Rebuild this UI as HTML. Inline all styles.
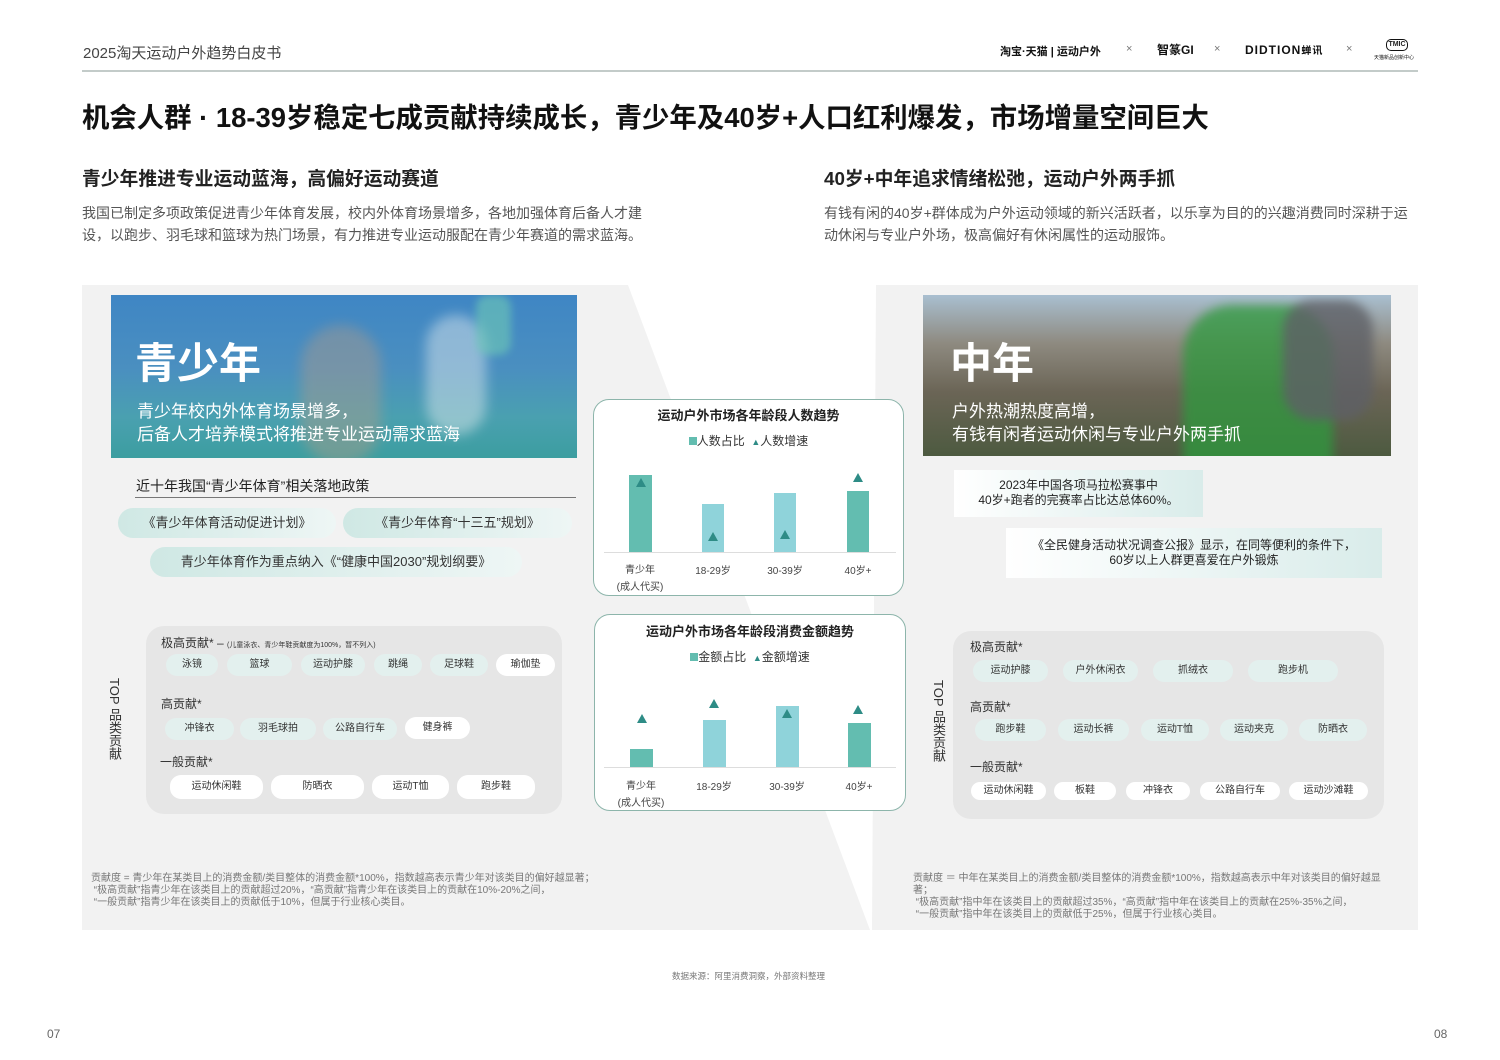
<!DOCTYPE html>
<html><head><meta charset="utf-8"><style>
*{margin:0;padding:0;box-sizing:border-box}
body{width:1500px;height:1060px;background:#fff;position:relative;overflow:hidden;font-family:"Liberation Sans","Noto Sans CJK SC",sans-serif;color:#222}
.a{position:absolute;white-space:nowrap}
.chip{position:absolute;height:22px;border-radius:11px;font-size:10px;line-height:22px;text-align:center;color:#333}
.m{background:#e3f0ee}.w{background:#fff}
.bar{position:absolute}
.tri{position:absolute;width:0;height:0;border-left:5px solid transparent;border-right:5px solid transparent;border-bottom:9px solid #2e8c86}
.lab{position:absolute;font-size:10px;color:#444;text-align:center;width:60px}
</style></head><body>
<div class="a" style="left:83px;top:42px;font-size:15px;color:#444">2025淘天运动户外趋势白皮书</div>
<div class="a" style="left:1000px;top:43px;font-size:11px;font-weight:bold;color:#111">淘宝·天猫 | 运动户外</div>
<div class="a" style="left:1126px;top:43px;font-size:11px;color:#777">×</div>
<div class="a" style="left:1157px;top:41px;font-size:12px;font-weight:bold;color:#111">智篆GI</div>
<div class="a" style="left:1214px;top:43px;font-size:11px;color:#777">×</div>
<div class="a" style="left:1245px;top:42px;font-size:12px;font-weight:bold;color:#111;letter-spacing:1px">DIDTION<span style="font-size:10px">蝉讯</span></div>
<div class="a" style="left:1346px;top:43px;font-size:11px;color:#777">×</div>
<div class="a" style="left:1386px;top:39px;width:22px;height:12px;border:1.5px solid #111;border-radius:5px;font-size:7px;font-weight:bold;line-height:9px;text-align:center">TMIC</div>
<div class="a" style="left:1374px;top:54px;font-size:5px;color:#111">天猫新品创新中心</div>
<div class="a" style="left:82px;top:70px;width:1336px;height:2px;background:#c3cbc9"></div>
<div class="a" style="left:82px;top:95px;font-size:27.4px;font-weight:bold;color:#111">机会人群 · 18-39岁稳定七成贡献持续成长，青少年及40岁+人口红利爆发，市场增量空间巨大</div>
<div class="a" style="left:82px;top:164px;font-size:18.8px;font-weight:bold;color:#222">青少年推进专业运动蓝海，高偏好运动赛道</div>
<div class="a" style="left:82px;top:202px;font-size:14px;color:#555;line-height:22px">我国已制定多项政策促进青少年体育发展，校内外体育场景增多，各地加强体育后备人才建<br>设，以跑步、羽毛球和篮球为热门场景，有力推进专业运动服配在青少年赛道的需求蓝海。</div>
<div class="a" style="left:824px;top:164px;font-size:18.8px;font-weight:bold;color:#222">40岁+中年追求情绪松弛，运动户外两手抓</div>
<div class="a" style="left:824px;top:202px;font-size:14px;color:#555;line-height:22px">有钱有闲的40岁+群体成为户外运动领域的新兴活跃者，以乐享为目的的兴趣消费同时深耕于运<br>动休闲与专业户外场，极高偏好有休闲属性的运动服饰。</div>

<svg class="a" style="left:0;top:0" width="1500" height="1060">
<polygon points="82,285 628,285 870,930 82,930" fill="#f2f2f2"/>
<polygon points="876,285 1418,285 1418,930 872,930" fill="#f2f2f2"/>
</svg>

<!-- left photo -->
<div class="a" style="left:111px;top:295px;width:466px;height:163px;background:linear-gradient(180deg,#3f86c4 0%,#4a8fc0 45%,#4aa0b0 75%,#3c9ea0 100%);overflow:hidden">
<div style="position:absolute;left:190px;top:30px;width:80px;height:140px;background:#b89c85;border-radius:40px;opacity:.4;filter:blur(6px)"></div>
<div style="position:absolute;left:315px;top:20px;width:60px;height:120px;background:#e8eef0;border-radius:30px;opacity:.45;filter:blur(6px)"></div>
<div style="position:absolute;left:365px;top:0;width:35px;height:60px;background:#6fcab6;border-radius:12px;opacity:.6;filter:blur(4px)"></div>
</div>
<div class="a" style="left:135px;top:330px;font-size:42px;font-weight:bold;color:#fff">青少年</div>
<div class="a" style="left:137px;top:400px;font-size:17px;color:#fff;line-height:23px">青少年校内外体育场景增多，<br>后备人才培养模式将推进专业运动需求蓝海</div>
<div class="a" style="left:136px;top:476px;font-size:14px;color:#222">近十年我国“青少年体育”相关落地政策</div>
<div class="a" style="left:135px;top:497px;width:441px;height:1px;background:#777"></div>
<div class="chip" style="left:118px;top:508px;width:218px;height:30px;border-radius:15px;line-height:30px;font-size:13px;background:linear-gradient(90deg,#cfe8e4,#eef6f5)">《青少年体育活动促进计划》</div>
<div class="chip" style="left:343px;top:508px;width:229px;height:30px;border-radius:15px;line-height:30px;font-size:13px;background:linear-gradient(90deg,#cfe8e4,#eef6f5)">《青少年体育“十三五”规划》</div>
<div class="chip" style="left:150px;top:547px;width:372px;height:30px;border-radius:15px;line-height:30px;font-size:13px;background:linear-gradient(90deg,#cfe8e4,#eef6f5)">青少年体育作为重点纳入《“健康中国2030”规划纲要》</div>

<div class="a" style="left:146px;top:626px;width:416px;height:188px;background:#e6e6e6;border-radius:18px"></div>
<div class="a" style="left:105px;top:678px;font-size:13px;writing-mode:vertical-rl;color:#333">TOP 品类贡献</div>
<div class="a" style="left:161px;top:634px;font-size:12px;color:#333">极高贡献* – <span style="font-size:7px">(儿童泳衣、青少年鞋贡献度为100%，暂不列入)</span></div>
<div class="chip m" style="left:166px;top:654px;width:52px">泳镜</div>
<div class="chip m" style="left:227px;top:654px;width:65px">篮球</div>
<div class="chip m" style="left:301px;top:654px;width:64px">运动护膝</div>
<div class="chip m" style="left:374px;top:654px;width:48px">跳绳</div>
<div class="chip m" style="left:430px;top:654px;width:58px">足球鞋</div>
<div class="chip w" style="left:496px;top:654px;width:59px">瑜伽垫</div>
<div class="a" style="left:161px;top:695px;font-size:12px;color:#333">高贡献*</div>
<div class="chip m" style="left:165px;top:718px;width:69px">冲锋衣</div>
<div class="chip m" style="left:240px;top:718px;width:76px">羽毛球拍</div>
<div class="chip m" style="left:323px;top:718px;width:74px">公路自行车</div>
<div class="chip w" style="left:405px;top:717px;width:65px">健身裤</div>
<div class="a" style="left:160px;top:753px;font-size:12px;color:#333">一般贡献*</div>
<div class="chip w" style="left:170px;top:775px;width:93px;height:24px;line-height:24px">运动休闲鞋</div>
<div class="chip w" style="left:271px;top:775px;width:93px;height:24px;line-height:24px">防晒衣</div>
<div class="chip w" style="left:372px;top:775px;width:77px;height:24px;line-height:24px">运动T恤</div>
<div class="chip w" style="left:457px;top:775px;width:78px;height:24px;line-height:24px">跑步鞋</div>
<div class="a" style="left:91px;top:873px;font-size:10px;color:#777;line-height:12px">贡献度 = 青少年在某类目上的消费金额/类目整体的消费金额*100%，指数越高表示青少年对该类目的偏好越显著；<br>&nbsp;“极高贡献”指青少年在该类目上的贡献超过20%，“高贡献”指青少年在该类目上的贡献在10%-20%之间，<br>&nbsp;“一般贡献”指青少年在该类目上的贡献低于10%，但属于行业核心类目。</div>

<!-- charts -->
<div class="a" style="left:593px;top:399px;width:311px;height:197px;background:#fff;border:1.5px solid #8db5ab;border-radius:16px"></div>
<div class="a" style="left:593px;top:405px;width:311px;text-align:center;font-size:13px;font-weight:bold;color:#222">运动户外市场各年龄段人数趋势</div>
<div class="a" style="left:593px;top:432px;width:311px;text-align:center;font-size:12px;color:#333"><span style="display:inline-block;width:8px;height:8px;background:#63bdb0"></span>人数占比 &nbsp;<span style="color:#2e8c86;font-size:9px">▲</span>人数增速</div>
<div class="a" style="left:604px;top:552px;width:292px;height:1px;background:#ddd"></div>
<div class="bar" style="left:629px;top:475px;width:23px;height:77px;background:#63bdb0"></div>
<div class="bar" style="left:702px;top:504px;width:22px;height:48px;background:#8fd3da"></div>
<div class="bar" style="left:774px;top:493px;width:22px;height:59px;background:#8fd3da"></div>
<div class="bar" style="left:847px;top:491px;width:22px;height:61px;background:#63bdb0"></div>
<div class="tri" style="left:636px;top:478px"></div><div class="tri" style="left:708px;top:532px"></div><div class="tri" style="left:780px;top:530px"></div><div class="tri" style="left:853px;top:473px"></div>
<div class="lab" style="left:610px;top:562px;line-height:17px">青少年<br>(成人代买)</div>
<div class="lab" style="left:683px;top:562px">18-29岁</div>
<div class="lab" style="left:755px;top:562px">30-39岁</div>
<div class="lab" style="left:828px;top:562px">40岁+</div>

<div class="a" style="left:594px;top:614px;width:312px;height:197px;background:#fff;border:1.5px solid #8db5ab;border-radius:16px"></div>
<div class="a" style="left:594px;top:621px;width:312px;text-align:center;font-size:13px;font-weight:bold;color:#222">运动户外市场各年龄段消费金额趋势</div>
<div class="a" style="left:594px;top:648px;width:312px;text-align:center;font-size:12px;color:#333"><span style="display:inline-block;width:8px;height:8px;background:#63bdb0"></span>金额占比 &nbsp;<span style="color:#2e8c86;font-size:9px">▲</span>金额增速</div>
<div class="a" style="left:604px;top:767px;width:292px;height:1px;background:#ddd"></div>
<div class="bar" style="left:630px;top:749px;width:23px;height:18px;background:#63bdb0"></div>
<div class="bar" style="left:703px;top:720px;width:23px;height:47px;background:#8fd3da"></div>
<div class="bar" style="left:776px;top:706px;width:23px;height:61px;background:#8fd3da"></div>
<div class="bar" style="left:848px;top:723px;width:23px;height:44px;background:#63bdb0"></div>
<div class="tri" style="left:637px;top:714px"></div><div class="tri" style="left:709px;top:699px"></div><div class="tri" style="left:782px;top:709px"></div><div class="tri" style="left:853px;top:705px"></div>
<div class="lab" style="left:611px;top:778px;line-height:17px">青少年<br>(成人代买)</div>
<div class="lab" style="left:684px;top:778px">18-29岁</div>
<div class="lab" style="left:757px;top:778px">30-39岁</div>
<div class="lab" style="left:829px;top:778px">40岁+</div>

<!-- right photo -->
<div class="a" style="left:923px;top:295px;width:468px;height:161px;background:linear-gradient(180deg,#a9bfd0 0%,#8e8a80 30%,#6b6556 60%,#4d5a40 100%);overflow:hidden">
<div style="position:absolute;left:260px;top:10px;width:150px;height:170px;background:#2f9a3e;border-radius:50px 50px 0 0;opacity:.75;filter:blur(5px)"></div>
<div style="position:absolute;left:360px;top:5px;width:90px;height:120px;background:#5e6066;border-radius:30px;opacity:.8;filter:blur(5px)"></div>
</div>
<div class="a" style="left:950px;top:330px;font-size:42px;font-weight:bold;color:#fff">中年</div>
<div class="a" style="left:952px;top:400px;font-size:17px;color:#fff;line-height:23px">户外热潮热度高增，<br>有钱有闲者运动休闲与专业户外两手抓</div>
<div class="a" style="left:954px;top:470px;width:249px;height:47px;background:linear-gradient(90deg,#fff,#d9ecea);font-size:12px;color:#222;text-align:center;line-height:15px;padding-top:8px">2023年中国各项马拉松赛事中<br>40岁+跑者的完赛率占比达总体60%。</div>
<div class="a" style="left:1006px;top:528px;width:376px;height:50px;background:linear-gradient(90deg,#fff,#d9ecea);font-size:12px;color:#222;text-align:center;line-height:15px;padding-top:10px">《全民健身活动状况调查公报》显示，在同等便利的条件下，<br>60岁以上人群更喜爱在户外锻炼</div>

<div class="a" style="left:953px;top:631px;width:431px;height:188px;background:#e6e6e6;border-radius:18px"></div>
<div class="a" style="left:929px;top:680px;font-size:13px;writing-mode:vertical-rl;color:#333">TOP 品类贡献</div>
<div class="a" style="left:970px;top:638px;font-size:12px;color:#333">极高贡献*</div>
<div class="chip m" style="left:973px;top:660px;width:75px">运动护膝</div>
<div class="chip m" style="left:1063px;top:660px;width:75px">户外休闲衣</div>
<div class="chip m" style="left:1153px;top:660px;width:80px">抓绒衣</div>
<div class="chip m" style="left:1248px;top:660px;width:90px">跑步机</div>
<div class="a" style="left:970px;top:698px;font-size:12px;color:#333">高贡献*</div>
<div class="chip m" style="left:975px;top:719px;width:71px">跑步鞋</div>
<div class="chip m" style="left:1058px;top:719px;width:71px">运动长裤</div>
<div class="chip m" style="left:1141px;top:719px;width:68px">运动T恤</div>
<div class="chip m" style="left:1220px;top:719px;width:68px">运动夹克</div>
<div class="chip m" style="left:1299px;top:719px;width:68px">防晒衣</div>
<div class="a" style="left:970px;top:758px;font-size:12px;color:#333">一般贡献*</div>
<div class="chip w" style="left:971px;top:782px;width:75px;height:18px;line-height:18px">运动休闲鞋</div>
<div class="chip w" style="left:1054px;top:782px;width:62px;height:18px;line-height:18px">板鞋</div>
<div class="chip w" style="left:1126px;top:782px;width:64px;height:18px;line-height:18px">冲锋衣</div>
<div class="chip w" style="left:1200px;top:782px;width:80px;height:18px;line-height:18px">公路自行车</div>
<div class="chip w" style="left:1289px;top:782px;width:79px;height:18px;line-height:18px">运动沙滩鞋</div>
<div class="a" style="left:913px;top:873px;font-size:10px;color:#777;line-height:12px">贡献度 ＝ 中年在某类目上的消费金额/类目整体的消费金额*100%，指数越高表示中年对该类目的偏好越显<br>著；<br>&nbsp;“极高贡献”指中年在该类目上的贡献超过35%，“高贡献”指中年在该类目上的贡献在25%-35%之间，<br>&nbsp;“一般贡献”指中年在该类目上的贡献低于25%，但属于行业核心类目。</div>

<div class="a" style="left:672px;top:970px;font-size:8.5px;color:#777">数据来源：阿里消费洞察，外部资料整理</div>
<div class="a" style="left:47px;top:1027px;font-size:12px;color:#666">07</div>
<div class="a" style="left:1434px;top:1027px;font-size:12px;color:#666">08</div>
</body></html>
